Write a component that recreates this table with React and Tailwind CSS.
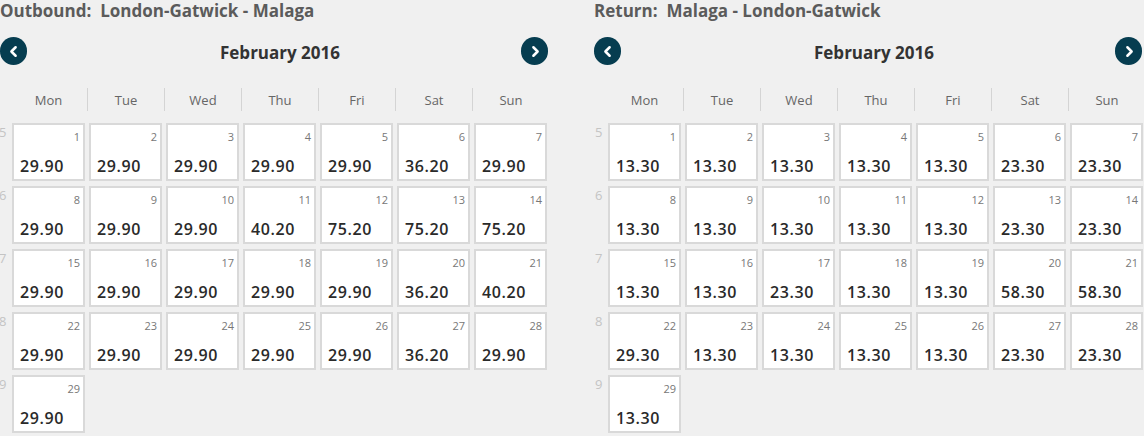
import { ChevronLeft, ChevronRight } from 'lucide-react';

const days = ['Mon', 'Tue', 'Wed', 'Thu', 'Fri', 'Sat', 'Sun'];

const outbound = [
  ['29.90', '29.90', '29.90', '29.90', '29.90', '36.20', '29.90'],
  ['29.90', '29.90', '29.90', '40.20', '75.20', '75.20', '75.20'],
  ['29.90', '29.90', '29.90', '29.90', '29.90', '36.20', '40.20'],
  ['29.90', '29.90', '29.90', '29.90', '29.90', '36.20', '29.90'],
  ['29.90'],
];

const inbound = [
  ['13.30', '13.30', '13.30', '13.30', '13.30', '23.30', '23.30'],
  ['13.30', '13.30', '13.30', '13.30', '13.30', '23.30', '23.30'],
  ['13.30', '13.30', '23.30', '13.30', '13.30', '58.30', '58.30'],
  ['29.30', '13.30', '13.30', '13.30', '13.30', '23.30', '23.30'],
  ['13.30'],
];

function NavButton({ dir }) {
  return (
    <button className="w-[27px] h-[28px] rounded-full bg-[#063d50] flex items-center justify-center text-white flex-shrink-0">
      {dir === 'left'
        ? <ChevronLeft className="w-[17px] h-[17px] -ml-[1px]" strokeWidth={3.5} />
        : <ChevronRight className="w-[17px] h-[17px] ml-[1px]" strokeWidth={3.5} />}
    </button>
  );
}

function Calendar({ label, route, weeks, wide }) {
  return (
    <div className="w-[549px] flex-shrink-0">
      <h2 className="text-[17px] leading-[22px] font-bold text-[#5b5b5b] whitespace-pre">
        {label}:  {route}
      </h2>

      {/* month switcher */}
      <div className="flex items-start h-[28px] mt-[15px] pr-[1px]">
        <NavButton dir="left" />
        <div className="flex-1 pl-[12px] pt-[5px] leading-[22px] text-center text-[17px] font-bold text-[#333]">February 2016</div>
        <NavButton dir="right" />
      </div>

      {/* weekday header */}
      <div className={`grid grid-cols-[repeat(7,77px)] mt-[23px] h-[23px] ${wide ? 'ml-[12px]' : 'ml-[10px]'}`}>
        {days.map((d, i) => (
          <div key={d} className={`flex items-center justify-center pt-[2px] text-[13px] text-[#666] ${i > 0 ? 'border-l border-[#d4d4d4]' : ''}`}>
            {d}
          </div>
        ))}
      </div>

      {/* weeks */}
      <div className="flex flex-col gap-[5px] mt-[12px]">
        {weeks.map((prices, w) => (
          <div key={w} className="flex">
            <div className={`text-[13px] leading-[18px] text-[#c4c4c4] ${wide ? 'w-[14px] pl-[1px]' : 'w-[12px] -ml-[1px] mr-[1px]'}`}>{w + 5}</div>
            <div className="grid grid-cols-[repeat(7,73px)] gap-[4px]">
              {prices.map((p, d) => (
                <div key={d} className="h-[58px] bg-white border-2 border-[#d9d9d9] flex flex-col justify-between pt-[5px] pb-[3px] pl-[6px] pr-[3px]">
                  <div className="text-right text-[11px] leading-[13px] text-[#777]">{w * 7 + d + 1}</div>
                  <div className="text-[16px] leading-[20px] font-semibold tracking-[0.6px] text-[#2a2a2a]">{p}</div>
                </div>
              ))}
            </div>
          </div>
        ))}
      </div>
    </div>
  );
}

export default function App() {
  return (
    <div className="w-[1144px] h-[436px] bg-[#f0f0f0] overflow-hidden flex gap-[45px] font-['Open_Sans',sans-serif]">
      <Calendar label="Outbound" route="London-Gatwick - Malaga" weeks={outbound} />
      <Calendar label="Return" route="Malaga - London-Gatwick" weeks={inbound} wide />
    </div>
  );
}
